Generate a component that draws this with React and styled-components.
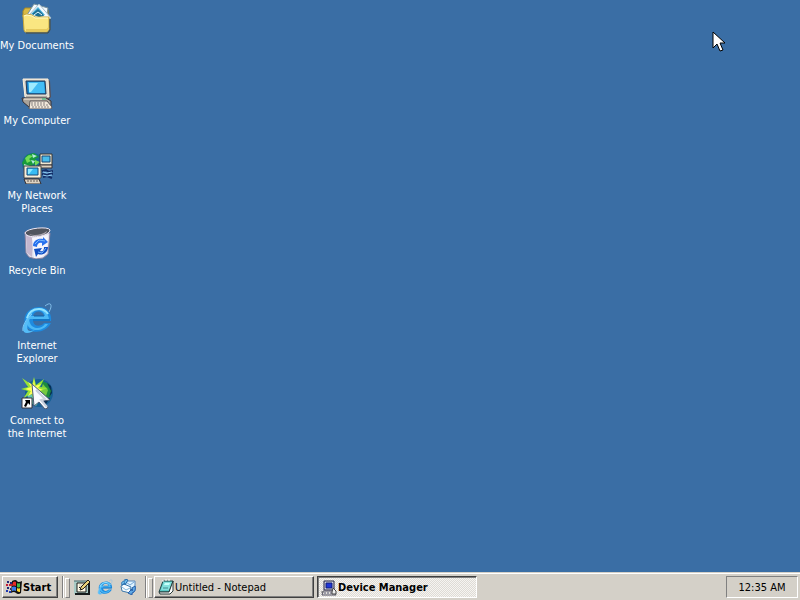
import React from "react";
import styled, { createGlobalStyle } from "styled-components";

const GlobalStyle = createGlobalStyle`
  * { box-sizing: border-box; }
  body {
    margin: 0;
    font-family: Tahoma, "DejaVu Sans Condensed", "DejaVu Sans", sans-serif;
    font-size: 11px;
    line-height: 13px;
  }
`;

const Screen = styled.div`
  position: relative;
  display: flex;
  flex-direction: column;
  min-height: 100vh;
  background: #3a6ea5;
  overflow: hidden;
  cursor: default;
`;

const Desktop = styled.main`
  flex: 1;
  padding-top: 2px;
`;

const IconColumn = styled.nav`
  display: grid;
  grid-auto-rows: 75px;
  width: 72px;
`;

const Shortcut = styled.button`
  display: flex;
  flex-direction: column;
  align-items: center;
  gap: 5px;
  padding: 0;
  border: 0;
  background: none;
  color: #fff;
  font: inherit;
  text-align: center;
`;

const ShortcutLabel = styled.span`
  white-space: pre;
`;

const Picture = styled.svg`
  display: block;
  flex: none;
  width: ${(p) => p.$size}px;
  height: ${(p) => p.$size}px;
`;

const Taskbar = styled.footer`
  display: flex;
  align-items: stretch;
  height: 28px;
  padding: 2px;
  background: #d4d0c8;
  border-top: 1px solid #d4d0c8;
  box-shadow: inset 0 1px 0 #fff;
`;

const BarButton = styled.button`
  display: flex;
  align-items: center;
  height: 22px;
  margin-top: 1px;
  padding: 0 3px;
  border: 1px solid;
  border-color: #fff #404040 #404040 #fff;
  box-shadow: inset -1px -1px 0 #808080;
  background: #d4d0c8;
  color: #000;
  font: inherit;
  white-space: nowrap;
`;

const StartButton = styled(BarButton)`
  width: 56px;
  gap: 1px;
  font-weight: bold;
`;

const TaskButton = styled(BarButton)`
  flex: 0 1 160px;
  gap: 1px;
  ${(p) =>
    p.$active &&
    `
    padding-top: 1px;
    font-weight: bold;
    border-color: #404040 #fff #fff #404040;
    box-shadow: inset 1px 1px 0 #808080;
    background: repeating-conic-gradient(#f6f4f1 0 25%, #dedbd5 0 50%) 0 0 / 2px 2px;
  `}
`;

const Grip = styled.div`
  width: 6px;
  height: 22px;
  margin: 1px 0 0 4px;
  border-left: 1px solid #808080;
  box-shadow: inset 1px 0 0 #fff;

  &::after {
    content: "";
    display: block;
    width: 3px;
    height: 18px;
    margin: 2px 0 0 2px;
    border: 1px solid;
    border-color: #fff #808080 #808080 #fff;
  }
`;

const QuickLaunch = styled.div`
  display: flex;
  align-items: center;
  gap: 7px;
  margin: 1px 5px 0 6px;
`;

const QuickButton = styled.button`
  padding: 0;
  border: 0;
  background: none;
`;

const Tasks = styled.div`
  display: flex;
  flex: 1;
  gap: 3px;
  margin-left: 3px;
`;

const Tray = styled.div`
  display: flex;
  align-items: center;
  justify-content: center;
  width: 72px;
  height: 22px;
  margin-top: 1px;
  border: 1px solid;
  border-color: #808080 #fff #fff #808080;
  color: #000;
  white-space: nowrap;
`;

const Pointer = styled.svg`
  position: absolute;
  left: 712px;
  top: 31px;
  width: 13px;
  height: 22px;
  pointer-events: none;
`;

const DocumentsIcon = () => (
  <Picture $size={32} viewBox="0 0 32 32" aria-hidden="true">
    <path d="M2 9l2-3h7l2 2h14v7H2z" fill="#d9b944" stroke="#a88a25" />
    <path d="M6 13l7-11 14 4-2 12H7z" fill="#f4f9fc" stroke="#78919d" />
    <path d="M18 2l12 14-9 4-12-8z" fill="#f3faff" stroke="#a5bccb" />
    <path d="M17 5l7 8-6 2-8-3z" fill="#49afd8" />
    <path d="M11 12l6-5 4 4 2 3-5 1z" fill="#1c6e94" />
    <path d="M13 13l4-3 4 3" stroke="#e5fbff" fill="none" />
    <path d="M2 13l3-1 6 1 3 2h14v12l-2 3H4l-1-2z" fill="#fae681" stroke="#c9a83b" />
    <path d="M3 14l3-1 5 1 3 2h13" stroke="#fff9c7" fill="none" />
    <path d="M5 28h21l2-2" stroke="#e6c95c" fill="none" strokeWidth="2" />
    <path d="M5 31h22l2-3V17" stroke="#4c4a38" fill="none" />
  </Picture>
);

const ComputerIcon = () => (
  <Picture $size={32} viewBox="0 0 32 32" aria-hidden="true">
    <path d="M4 2h22l3 2 1 16-3 3H5z" fill="#57515a" />
    <path d="M2 2h25l1 18H4z" fill="#dedbd2" stroke="#fff1da" />
    <path d="M5 4h19l1 13H6z" fill="#137bc3" stroke="#263a55" />
    <path d="M7 5h16l1 11H8z" fill="#43bdf5" />
    <path d="M8 6h9l-7 9H8z" fill="#9eeaff" />
    <path d="M1 21h24l5 3v6H8l-6-5z" fill="#aaa39a" stroke="#36333a" />
    <path d="M3 22h22" stroke="#fff4df" />
    <path d="M9 24h17l5 6-1 2H8z" fill="#f1e8da" stroke="#5c5758" />
    <path d="M10 26h15M10 28h17M11 30h18" stroke="#858080" strokeDasharray="2 1" />
    <path d="M5 20h21" stroke="#777" />
    <path d="M21 22h4" stroke="#21b56a" />
  </Picture>
);

const NetworkIcon = () => (
  <Picture $size={32} viewBox="0 0 32 32" aria-hidden="true">
    <circle cx="12" cy="12" r="11" fill="#176c91" />
    <path d="M1 11l5-8 7-2 5 4-4 2 3 4-6 2-2 4-5-1z" fill="#199b3b" />
    <path d="M4 6l4-3 4 1-4 3 2 2-4 2zM14 8l5 2-5 4z" fill="#71dc55" />
    <path d="M3 12l6 2-1 5-5-1zM11 2l5 2-4 2zM10 8l4 1-2 3z" fill="#b6eadf" />
    <path d="M19 2h12v11H19z" fill="#f0e7d1" stroke="#343636" />
    <path d="M21 4h8v6h-8z" fill="#48bceb" stroke="#174774" />
    <path d="M18 13h13v3H18z" fill="#ddd1bd" stroke="#343039" />
    <path d="M3 14h17v12H3z" fill="#f6eedb" stroke="#4b4645" />
    <path d="M6 16h11v7H6z" fill="#37bbf3" stroke="#164b7b" />
    <path d="M7 17h5l-4 5H7z" fill="#8beaff" />
    <path d="M3 27h15l2 5H5z" fill="#ded3c2" stroke="#302c31" />
    <path d="M6 29h12" stroke="#655c58" strokeDasharray="2 1" />
    <path d="M21 19l4-1 3 2 4-1M21 22l5 1 3-2 3 1M22 25l4-1 5 2" stroke="#142e68" fill="none" strokeWidth="2" />
    <path d="M22 20l4 1 5-1M22 23l4 1 5-1" stroke="#91cef5" fill="none" />
  </Picture>
);

const RecycleIcon = () => (
  <Picture $size={32} viewBox="0 0 32 32" aria-hidden="true">
    <path d="M4 5l25 1-2 21-5 4-7 1-7-2-3-4z" fill="#e3e2ee" stroke="#8b83a0" />
    <path d="M5 8l7 3-1 19-5-4z" fill="#c4b6ce" />
    <path d="M11 11l16-3-1 17-5 5-8 1z" fill="#f6f5fc" />
    <path d="M4 6c1-5 24-7 25-3 0 6-22 10-25 3z" fill="#50545e" stroke="#eee8f6" />
    <path d="M8 7c5 2 13 1 18-3-1 5-13 7-18 3z" fill="#aaa5af" />
    <path d="M12 19c0-6 6-8 10-7v-2l5 5-6 4v-3c-3-1-5 1-5 4z" fill="#2870ed" />
    <path d="M27 20c0 6-6 9-10 7l-2 3-2-8 8-1-2 3c3 1 4-1 4-4z" fill="#124ec2" />
    <path d="M14 17l4-4 6 1M17 25l4 1 4-5" stroke="#76b8ff" fill="none" />
  </Picture>
);

const ExplorerIcon = ({ size = 32 }) => (
  <Picture $size={size} viewBox="0 0 32 32" aria-hidden="true">
    <path d="M24 4c6-5 8-1 4 6" stroke="#82bde8" strokeWidth="1" fill="none" />
    <path d="M30 19H12c1 6 8 6 11 2h7C25 31 10 33 5 24 0 14 8 5 18 5c8 0 13 6 12 14zm-7-5c-1-6-10-6-11 0z" fill="#1d8be0" fillRule="evenodd" />
    <path d="M28 17H8c1 11 12 11 16 5h3C22 30 9 30 6 22 3 14 9 7 17 7c6 0 10 4 11 10zm-4-3c-2-8-12-7-14 0z" fill="#4cb8f5" fillRule="evenodd" />
    <path d="M6 16C8 9 13 7 18 7c4 0 7 2 9 5" stroke="#91e3ff" fill="none" strokeWidth="2" />
    <path d="M11 12C2 20-1 31 6 31c3 0 6-2 8-3-8 3-11 0-3-16z" fill="#55bdf8" />
    <path d="M2 29c-1-5 3-12 9-17" stroke="#79c9f8" fill="none" />
    <path d="M12 18h17M13 14h10" stroke="#0a63ad" />
  </Picture>
);

const ConnectIcon = () => (
  <Picture $size={32} viewBox="0 0 32 32" aria-hidden="true">
    <circle cx="18" cy="16" r="14" fill="#176095" />
    <path d="M21 4l7 3 3 7-2 6-4 1-3-7z" fill="#1c8b3d" />
    <path d="M22 7l5 6-2 6-6-5z" fill="#75c941" />
    <path d="M6 17l7 1 5 7-3 4-7-4z" fill="#61c6b0" />
    <path d="M26 6l4 8-2 6 3-4-1-7zM24 22l5-1-4 6-4 2z" fill="#082e56" />
    <path d="M1 1l10 7 2-8 2 8 8-6-4 8 8 1-8 3 5 7-8-5-3 7-3-7-8 6 5-8-7-2 7-2z" fill="#97e335" />
    <path d="M13 2l1 7 6-2-3 4 5 2-6 1 1 7-4-5-6 3 3-5-6-2 6-2-3-5 5 3z" fill="#ffff58" />
    <path d="M11 7l18 16-7 1 5 7-3 1-6-7-5 4z" fill="#f8fbff" stroke="#4c5b75" />
    <path d="M15 13l9 9-4 1 6 7" fill="none" stroke="#c9d0dd" strokeWidth="2" />
    <path d="M1 21h10v10H1z" fill="#fff" stroke="#35323a" />
    <path d="M4 23h5v5l-2-2-2 4-2-1 2-4z" fill="#000" />
  </Picture>
);

const StartIcon = () => (
  <Picture $size={16} viewBox="0 0 16 16" aria-hidden="true">
    <path d="M6 2q4-2 5 0t5 0l-1 12q-3 2-5 0t-5 0z" fill="#111" />
    <path d="M7 3q2-1 3 0v4q-2-1-4 0z" fill="#e82c27" />
    <path d="M11 4q2 1 3 0v4q-2 1-3 0z" fill="#43b947" />
    <path d="M6 8q2-1 4 0v4q-2-1-4 0z" fill="#397aeb" />
    <path d="M11 9q2 1 3 0v4q-2 0-3-1z" fill="#ffd735" />
    <path d="M1 3h2M4 4h2M1 9h2M4 10h1" stroke="#202878" strokeWidth="2" />
    <path d="M0 6h2M3 6h3" stroke="#c51c35" strokeWidth="2" />
    <path d="M0 12h2M3 13h2" stroke="#2039b0" strokeWidth="2" />
  </Picture>
);

const ShowDesktopIcon = () => (
  <Picture $size={16} viewBox="0 0 16 16" aria-hidden="true">
    <path d="M0 2h15v13H0z" fill="#a9cbc5" />
    <path d="M0 2h14" stroke="#45666b" />
    <path d="M15 3v12H1" stroke="#171c1c" fill="none" strokeWidth="2" />
    <path d="M3 4h9v9H3z" fill="#fffbe9" stroke="#1b1916" />
    <path d="M5 6h4M5 8h2" stroke="#c6c3ac" />
    <path d="M14 1l2 2-7 7-3 1 1-3z" fill="#ead37a" stroke="#272115" />
    <path d="M5 8l3 3" stroke="#171717" />
  </Picture>
);

const MailIcon = () => (
  <Picture $size={16} viewBox="0 0 16 16" aria-hidden="true">
    <path d="M5 2h10v10l-2 2-8-2z" fill="#dff3ff" stroke="#5989bd" />
    <path d="M6 3l4 3 4-3" stroke="#78a9d8" fill="none" />
    <path d="M1 7l3-2 7 3-1 6-8-2z" fill="#f7fcff" stroke="#3c77aa" />
    <path d="M2 8l4 3 4-2" stroke="#81b6da" fill="none" />
    <path d="M8 1L5 0v2C2 2 1 4 2 6l2-1q0-2 1-1v2z" fill="#73c2ef" stroke="#246cae" />
    <path d="M8 14l4 2v-2c3-1 4-4 3-7l-3 2q1 2 0 3v-2z" fill="#62aae5" stroke="#245da7" />
  </Picture>
);

const NotepadIcon = () => (
  <Picture $size={16} viewBox="0 0 16 16" aria-hidden="true">
    <path d="M5 2h10l-4 11H1z" fill="#5bcac7" stroke="#214848" />
    <path d="M6 3h8l-3 8H3z" fill="#83e1dd" />
    <path d="M7 4h5l-1 2H6z" fill="#c6fffa" />
    <path d="M5 9h5" stroke="#438c91" />
    <path d="M15 2v10l-3 3H2l-1-2h10z" fill="#fff" stroke="#263838" />
    <path d="M4 2h2M7 1h2M10 1h2" stroke="#fff" />
  </Picture>
);

const DeviceIcon = () => (
  <Picture $size={16} viewBox="0 0 16 16" aria-hidden="true">
    <path d="M3 1h10v9H3z" fill="#d5d5e0" stroke="#242443" />
    <path d="M5 3h6v5H5z" fill="#2036d7" stroke="#111c78" />
    <path d="M2 11h11l2 4H1z" fill="#e1dfd9" stroke="#555366" />
    <path d="M3 13h8" stroke="#555575" strokeDasharray="2 1" />
    <path d="M12 8l3 3v3h-4v-2z" fill="#eee" stroke="#444" />
    <path d="M0 12h3" stroke="#777" />
  </Picture>
);

const shortcuts = [
  { label: "My Documents", Icon: DocumentsIcon },
  { label: "My Computer", Icon: ComputerIcon },
  { label: "My Network\nPlaces", Icon: NetworkIcon },
  { label: "Recycle Bin", Icon: RecycleIcon },
  { label: "Internet\nExplorer", Icon: ExplorerIcon },
  { label: "Connect to\nthe Internet", Icon: ConnectIcon },
];

export default function App() {
  return (
    <>
      <GlobalStyle />
      <Screen>
        <Desktop>
          <IconColumn aria-label="Desktop">
            {shortcuts.map(({ label, Icon }) => (
              <Shortcut key={label}>
                <Icon />
                <ShortcutLabel>{label}</ShortcutLabel>
              </Shortcut>
            ))}
          </IconColumn>
        </Desktop>
        <Taskbar>
          <StartButton>
            <StartIcon />
            Start
          </StartButton>
          <Grip />
          <QuickLaunch>
            <QuickButton aria-label="Show Desktop"><ShowDesktopIcon /></QuickButton>
            <QuickButton aria-label="Internet Explorer"><ExplorerIcon size={16} /></QuickButton>
            <QuickButton aria-label="Outlook Express"><MailIcon /></QuickButton>
          </QuickLaunch>
          <Grip />
          <Tasks>
            <TaskButton><NotepadIcon />Untitled - Notepad</TaskButton>
            <TaskButton $active aria-pressed="true"><DeviceIcon />Device Manager</TaskButton>
          </Tasks>
          <Tray><time>12:35 AM</time></Tray>
        </Taskbar>
        <Pointer viewBox="0 0 13 22" aria-hidden="true">
          <path d="M1 1v16l4-4 3 7 3-1-3-7h5z" fill="#fff" stroke="#000" />
        </Pointer>
      </Screen>
    </>
  );
}
